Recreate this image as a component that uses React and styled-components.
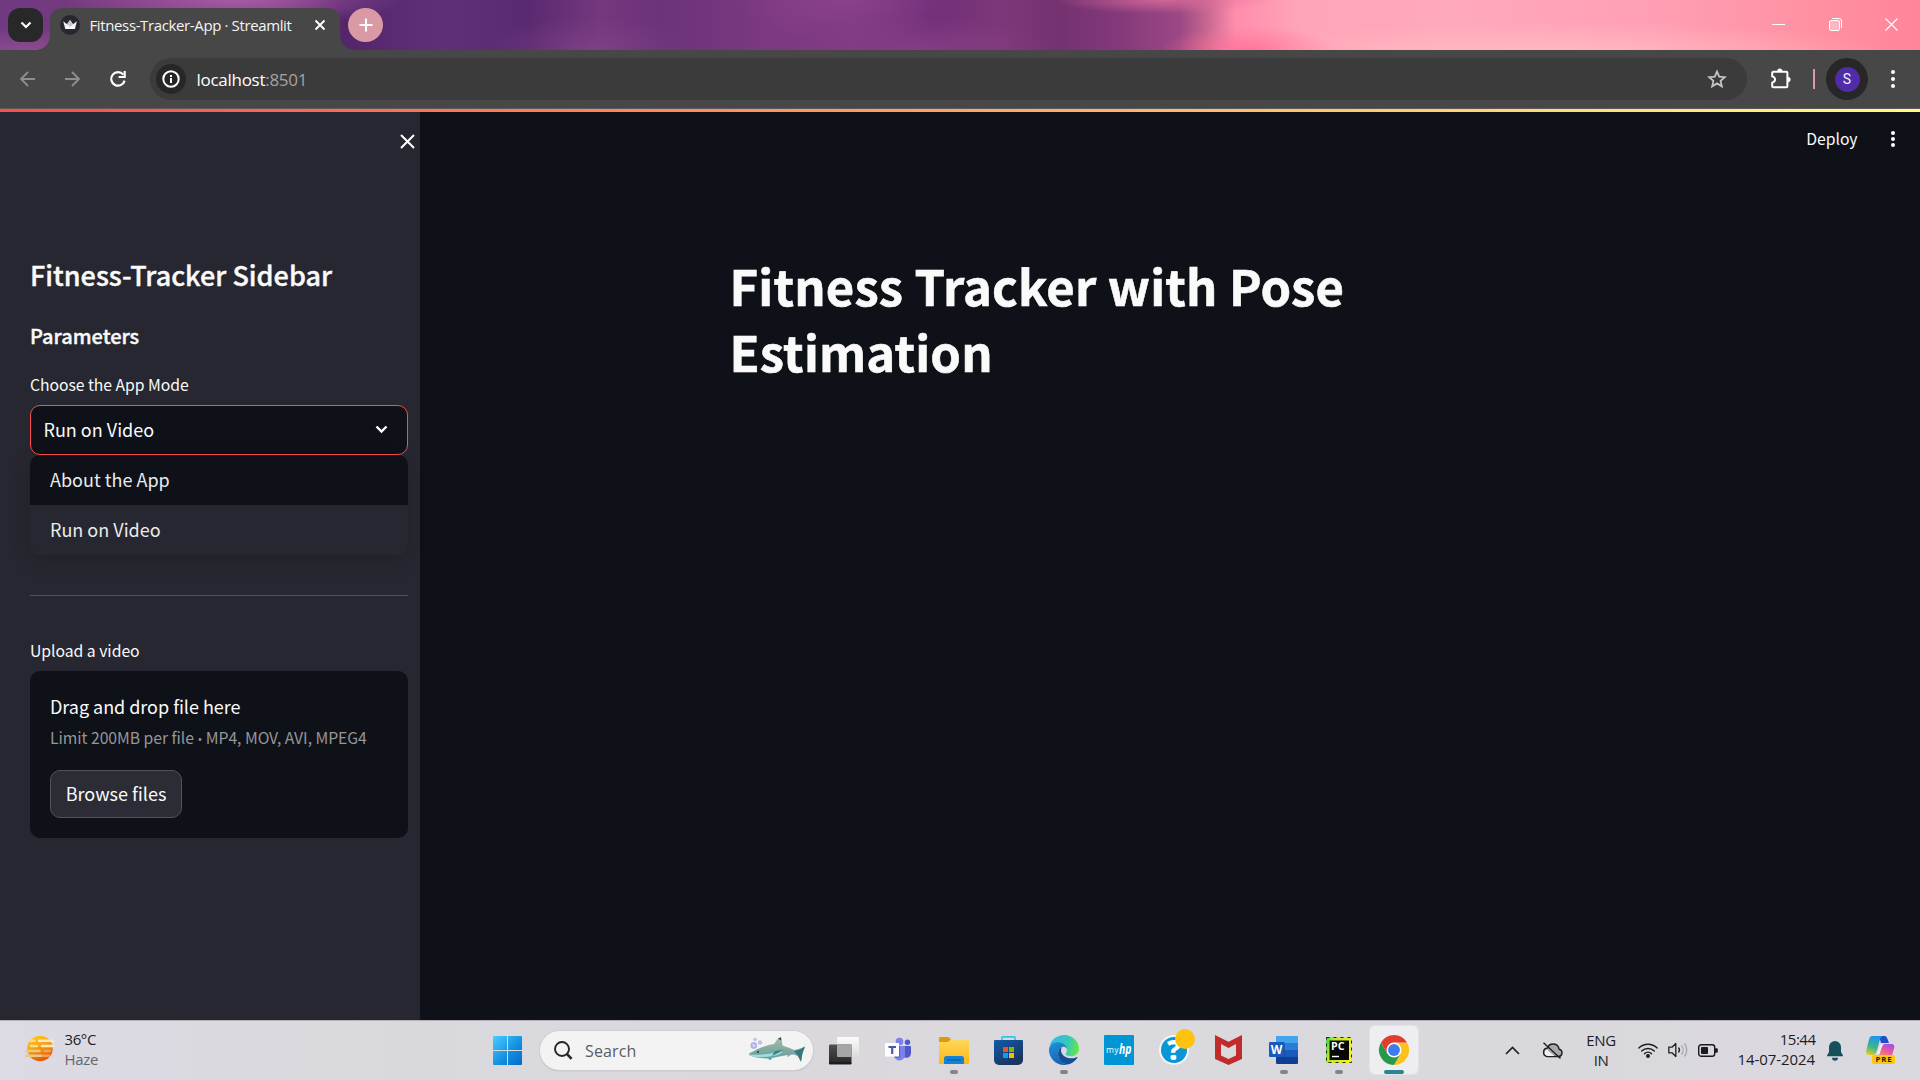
import React from 'react';
import styled, { createGlobalStyle } from 'styled-components';

const source = '"Noto Sans CJK SC", "Open Sans", sans-serif';
const system = '"Open Sans", "Noto Sans", sans-serif';

const GlobalStyle = createGlobalStyle`
  * { box-sizing: border-box; }
  body { margin: 0; background: #0e1117; overflow: hidden; }
  svg { display: block; flex: none; overflow: visible; }
  button { font: inherit; color: inherit; border: 0; padding: 0; background: none; }
`;

const Screen = styled.div`
  width: 1920px;
  height: 1080px;
  display: flex;
  flex-direction: column;
  overflow: hidden;
`;

/* ---------- browser tab strip ---------- */

const TabStrip = styled.header`
  height: 50px;
  flex: none;
  display: flex;
  align-items: flex-start;
  padding: 8px 0 0 8px;
  background:
    radial-gradient(ellipse 170px 26px at 235px 0, #a65aa6 0%, rgba(166, 90, 166, 0) 100%),
    radial-gradient(ellipse 130px 22px at 30px 50px, #8d4a90 0%, rgba(141, 74, 144, 0) 100%),
    radial-gradient(ellipse 100px 34px at 590px 50px, rgba(131, 68, 139, .6) 0%, rgba(131, 68, 139, 0) 100%),
    radial-gradient(ellipse 110px 44px at 850px 0, rgba(150, 70, 148, .6) 0%, rgba(150, 70, 148, 0) 100%),
    radial-gradient(ellipse 130px 34px at 920px 50px, rgba(146, 70, 140, .6) 0%, rgba(146, 70, 140, 0) 100%),
    radial-gradient(ellipse 110px 14px at 1165px 0, rgba(222, 110, 155, .8) 0%, rgba(222, 110, 155, 0) 100%),
    radial-gradient(ellipse 90px 24px at 1250px 50px, rgba(255, 112, 150, .8) 0%, rgba(255, 112, 150, 0) 100%),
    radial-gradient(ellipse 340px 34px at 1560px 56px, rgba(255, 190, 195, .9) 0%, rgba(255, 190, 195, 0) 100%),
    linear-gradient(90deg, #6f3a80 0, #77397f 120px, #7b3a84 260px, #54256a 345px, #5f3078 440px,
      #5a2a70 530px, #75377e 600px, #6c327a 660px, #7d3a82 780px, #7b3880 850px, #702f78 930px,
      #7c3779 1000px, #743270 1060px, #84397a 1120px, #9c4884 1180px, #c4648f 1205px, #ff8dac 1235px,
      #ffa5b8 1300px, #ffa9bc 1450px, #ff9fb4 1650px, #ff92a4 1800px, #ff849a 1920px);
`;

const TabSearch = styled.button`
  width: 35px;
  height: 34px;
  border-radius: 12px;
  background: #282828;
  display: grid;
  place-items: center;
  margin-right: 7px;
`;

const Tab = styled.div`
  position: relative;
  width: 290px;
  height: 42px;
  padding: 0 14px 8px 10px;
  display: flex;
  align-items: center;
  background: #474747;
  border-radius: 12px 12px 0 0;

  &::before, &::after {
    content: "";
    position: absolute;
    bottom: 0;
    width: 14px;
    height: 14px;
  }
  &::before { left: -14px; background: radial-gradient(circle at 0 0, transparent 13.5px, #474747 14px); }
  &::after { right: -14px; background: radial-gradient(circle at 100% 0, transparent 13.5px, #474747 14px); }
`;

const TabTitle = styled.span`
  font: 400 15px/22px ${system};
  letter-spacing: -.376px;
  color: #f4f4f4;
  margin-left: 9.5px;
  flex: 1;
  white-space: nowrap;
  padding-bottom: 1px;
`;

const NewTab = styled.button`
  width: 35px;
  height: 34px;
  border-radius: 50%;
  margin-left: 8px;
  background: #d99aa6;
  display: grid;
  place-items: center;
`;

const WindowControls = styled.div`
  margin-left: auto;
  display: flex;
  padding: 10px 22px 0 0;
  gap: 43.5px;
`;

/* ---------- browser toolbar ---------- */

const Toolbar = styled.nav`
  height: 59px;
  flex: none;
  background: #474747;
  border-bottom: 1px solid #5b5b5b;
  display: flex;
  align-items: center;
  padding: 0 18px;
`;

const NavButtons = styled.div`
  width: 132px;
  display: flex;
  align-items: center;
  gap: 24px;
  svg:last-child { margin-left: 3px; }
`;

const AddressBar = styled.div`
  width: 1597px;
  height: 42px;
  border-radius: 21px;
  background: #3b3b3b;
  display: flex;
  align-items: center;
  padding: 0 20px 0 6px;
`;

const SiteInfo = styled.span`
  width: 30px;
  height: 30px;
  border-radius: 50%;
  background: #272727;
  display: grid;
  place-items: center;
`;

const Url = styled.span`
  font: 400 17px/24px ${system};
  letter-spacing: -.28px;
  color: #fff;
  margin-left: 10.5px;
  padding-top: 1px;
  flex: 1;
  span { color: #a3a3a3; }
`;

const ToolbarEnd = styled.div`
  display: flex;
  align-items: center;
  flex: 1;
  padding-left: 23px;
  svg:first-child { margin-top: -2px; }
`;

const ToolbarDivider = styled.i`
  width: 2px;
  height: 20px;
  background: #d99aa6;
  margin: 0 11px 0 22px;
`;

const AvatarRing = styled.span`
  width: 42px;
  height: 42px;
  border-radius: 50%;
  background: #272727;
  display: grid;
  place-items: center;
  margin-right: 21.5px;
`;

const Avatar = styled.span`
  width: 25px;
  height: 25px;
  border-radius: 50%;
  background: #4f2ca8;
  color: #f2effa;
  font: 400 14px/25px Roboto, sans-serif;
  text-align: center;
`;

/* ---------- page ---------- */

const Page = styled.div`
  flex: 1;
  min-height: 0;
  display: flex;
  flex-direction: column;
  background: #0e1117;
`;

const Decoration = styled.div`
  height: 3px;
  flex: none;
  background: linear-gradient(90deg, #ff4b4b, #fffd80);
`;

const PageBody = styled.div`
  flex: 1;
  display: flex;
`;

const Sidebar = styled.aside`
  width: 420px;
  background: #262730;
  color: #fafafa;
  font-family: ${source};
  padding: 0 12px 0 30px;
`;

const SidebarHeader = styled.div`
  height: 145px;
  display: flex;
  justify-content: flex-end;
  padding-top: 22px;
  margin-right: -7px;
`;

const SidebarTitle = styled.h2`
  margin: 0 0 31px;
  font-size: 27px;
  line-height: 36px;
  font-weight: 500;
  -webkit-text-stroke: .4px currentColor;
`;

const SidebarSubtitle = styled.h3`
  margin: 0 0 27px;
  font-size: 20px;
  line-height: 24px;
  font-weight: 500;
  -webkit-text-stroke: .4px currentColor;
`;

const Label = styled.label`
  display: block;
  font-size: 15.75px;
  line-height: 20px;
  letter-spacing: ${p => p.$tracking || 0}px;
  margin-bottom: 10px;
`;

const Select = styled.div`
  position: relative;
  height: 50px;
  border: 1px solid #ff4b4b;
  border-radius: 10px;
  background: #0e1117;
  display: flex;
  align-items: center;
  justify-content: space-between;
  padding: 0 19px 2px 12.5px;
  font-size: 18px;
  line-height: 24px;
  svg { margin-top: 1px; }
`;

const Menu = styled.div`
  position: absolute;
  left: -1px;
  right: -1px;
  top: 49px;
  border-radius: 10px;
  overflow: hidden;
  background: #262730;
  box-shadow: 0 5px 20px rgba(0, 0, 0, .16);
`;

const Option = styled.div`
  height: 50px;
  padding: 12px 20px 14px 20px;
  color: #ebebec;
  background: ${p => (p.$highlighted ? '#0e1117' : 'transparent')};
`;

const Rule = styled.hr`
  border: 0;
  height: 1px;
  background: #51525a;
  margin: 140px 0 45px;
`;

const Dropzone = styled.section`
  height: 167px;
  border-radius: 10px;
  background: #0e1117;
  padding: 23px 20px 20px;
  display: flex;
  flex-direction: column;
  align-items: flex-start;
`;

const DropTitle = styled.span`
  font-size: 18px;
  line-height: 24px;
  margin-bottom: 10px;
  letter-spacing: -.03px;
`;

const DropHint = styled.small`
  font-size: 15.75px;
  line-height: 20px;
  letter-spacing: -.05px;
  color: #95969a;
  white-space: nowrap;
  b { font: 400 13px/1 "Open Sans", sans-serif; }
`;

const BrowseButton = styled.button`
  && {
    width: 132px;
    height: 48px;
    margin-top: 22px;
    padding-bottom: 2px;
    border: 1px solid #51525a;
    border-radius: 10px;
    background: #2b2c36;
    font: 400 18px/24px ${source};
  }
`;

const Main = styled.main`
  flex: 1;
  color: #fafafa;
  font-family: ${source};
`;

const MainHeader = styled.div`
  height: 140px;
  display: flex;
  justify-content: flex-end;
  align-items: flex-start;
  padding: 16px 24.5px 0 0;
`;

const Deploy = styled.span`
  font-size: 15.75px;
  line-height: 22px;
  letter-spacing: -.056px;
  margin-right: 32px;
`;

const Title = styled.h1`
  width: 880px;
  margin: 0 auto;
  font-size: 49px;
  line-height: 66px;
  font-weight: 700;
  letter-spacing: .162px;
  text-indent: -.5px;
  -webkit-text-stroke: .6px currentColor;
  span { display: block; }
`;

/* ---------- taskbar ---------- */

const Taskbar = styled.footer`
  height: 60px;
  flex: none;
  display: flex;
  align-items: center;
  padding-bottom: 1px;
  border-top: 1px solid #b4b2b7;
  background: linear-gradient(90deg, #dcdae4 0, #d9d9dd 400px, #dbd8dd 800px, #dad9de 1100px, #d9d8dc 1500px, #dbd9e0 1920px);
  font-family: ${system};
  color: #1d1d1f;
`;

const Weather = styled.div`
  width: 480px;
  display: flex;
  align-items: center;
  gap: 9.5px;
  padding-left: 25px;
  padding-bottom: 3px;
`;

const Stack = styled.div`
  display: flex;
  flex-direction: column;
  text-align: ${p => p.$align || 'left'};
  font-size: 15px;
  line-height: 20px;
  white-space: nowrap;
`;

const Tight = styled.span`
  letter-spacing: ${p => p.$by}px;
  color: ${p => p.$color || 'inherit'};
  margin-right: ${p => p.$by}px;
`;

const StartSlot = styled.div`
  width: 60px;
  padding-left: 13px;
`;

const SearchBox = styled.div`
  width: 273px;
  height: 39px;
  border-radius: 20px;
  background: #f3f3f4;
  box-shadow: 0 0 0 1px #cfcdd2, 0 1px 1px #8f8d92;
  display: flex;
  align-items: center;
  padding: 0 7px 0 14px;
  margin-right: 3px;
`;

const SearchText = styled.span`
  flex: 1;
  margin-left: 12px;
  padding-top: 1px;
  font-size: 16px;
  line-height: 24px;
  letter-spacing: .13px;
  color: #5c5c5e;
`;

const AppSlot = styled.div`
  width: 55px;
  height: 48px;
  display: grid;
  place-items: center;
  position: relative;
`;

const ActiveTile = styled.div`
  width: 48px;
  height: 48px;
  border-radius: 5px;
  background: #eeedf0;
  box-shadow: 0 0 0 1px #e3e2e6;
  display: grid;
  place-items: center;
`;

const Indicator = styled.i`
  position: absolute;
  bottom: 0;
  left: 50%;
  width: ${p => (p.$active ? 20 : 8)}px;
  height: 4px;
  margin-left: ${p => (p.$active ? -10 : -4)}px;
  border-radius: 2px;
  background: ${p => (p.$active ? '#2b8492' : '#858387')};
`;

const Tray = styled.div`
  margin-left: auto;
  display: flex;
  align-items: center;
  padding-right: 25px;
`;

const TrayItem = styled.div`
  margin-right: ${p => p.$gap}px;
  padding-bottom: ${p => p.$lift || 0}px;
`;

/* ---------- icons ---------- */

const Stroke = ({ w, h = w, d, color = '#fff', width = 2, ...rest }) => (
  <svg width={w} height={h} viewBox={`0 0 ${w} ${h}`} fill="none" stroke={color} strokeWidth={width} {...rest}>
    <path d={d} />
  </svg>
);

const Dots = ({ gap = 7 }) => (
  <svg width="6" height="22" viewBox="0 0 6 22" fill="#fff">
    <circle cx="3" cy={11 - gap} r="2" /><circle cx="3" cy="11" r="2" /><circle cx="3" cy={11 + gap} r="2" />
  </svg>
);

const Favicon = () => (
  <svg width="20" height="20" viewBox="0 0 20 20">
    <circle cx="10" cy="10" r="10" fill="#262730" />
    <path d="M3.2 6.2 7 9.2 10 5l3 4.200L16.900 6.200 15 13.800H5.200z" fill="#f3f3f3" />
    <path d="M7 9.200 10 5l3 4.200-3 2.800z" fill="#c9c9cb" />
    <path d="M5 12h10l-.4 2H5.500z" fill="#fff" />
  </svg>
);

const Reload = () => (
  <svg width="18" height="18" viewBox="0 0 18 18" fill="none" stroke="#fff" strokeWidth="2.200">
    <path d="M14.300 4.600A6.800 6.800 0 1 0 15.600 10.600" />
    <path d="M15.700 1v6H9.600" />
  </svg>
);

const Info = () => (
  <svg width="18" height="18" viewBox="0 0 18 18">
    <circle cx="9" cy="9" r="7.700" fill="none" stroke="#fff" strokeWidth="2" />
    <path d="M8 8h2v5H8zM8 5h2v2H8z" fill="#fff" />
  </svg>
);

const Star = () => (
  <svg width="20" height="20" viewBox="0 0 20 20" fill="none" stroke="#c4c4c4" strokeWidth="1.800">
    <path d="m10 2.600 2.200 5.100 5.600.5-4.200 3.700 1.200 5.400-4.800-2.900-4.800 2.900 1.200-5.400L2.200 8.200l5.600-.5z" />
  </svg>
);

const Puzzle = () => (
  <svg width="21" height="21" viewBox="0 0 21 21">
    <path d="M3.200 3.800h13.200a1 1 0 0 1 1 1v13.400a1 1 0 0 1-1 1H3.200a1 1 0 0 1-1-1v-3.600c3.800-1 3.800-5.200 0-6.200V4.800a1 1 0 0 1 1-1z" fill="none" stroke="#fff" strokeWidth="2" />
    <path d="M7.400 3.200a2.400 2.400 0 0 1 4.800 0zM18 9.200a2.400 2.400 0 0 1 0 4.800z" fill="#fff" stroke="#fff" strokeWidth=".6" />
  </svg>
);

const Restore = () => (
  <svg width="13" height="13" viewBox="0 0 13 13" fill="none" stroke="#fff">
    <rect x=".5" y="2.500" width="10" height="10" rx="1.500" fill="rgba(255,255,255,.35)" />
    <path d="M3 .5h7A2.500 2.500 0 0 1 12.500 3v7" />
  </svg>
);

const Haze = () => (
  <svg width="30" height="28" viewBox="0 0 30 28">
    <defs>
      <linearGradient id="sun" x1="0" y1="0" x2=".4" y2="1"><stop offset="0" stopColor="#ffd21c" /><stop offset=".5" stopColor="#f9a216" /><stop offset="1" stopColor="#e65c10" /></linearGradient>
    </defs>
    <circle cx="15" cy="13.500" r="12.800" fill="url(#sun)" />
    <g strokeWidth="2.600" strokeLinecap="round">
      <path d="M14 5.800h14.500M17 11h11" stroke="#f6e9c4" />
      <path d="M5.500 5.800h4M6 11h6" stroke="#ffd98a" />
      <path d="M1.500 16h13M1.500 20.800h15" stroke="#e6cb83" />
      <path d="M19.500 16h5M19 20.800h5" stroke="#f6a54b" />
    </g>
  </svg>
);

const Windows = () => (
  <svg width="29" height="29" viewBox="0 0 29 29">
    <defs><linearGradient id="win" x1="0" y1="0" x2="1" y2="1"><stop offset="0" stopColor="#4bcdff" /><stop offset=".55" stopColor="#1592e0" /><stop offset="1" stopColor="#0568c8" /></linearGradient></defs>
    <path fill="url(#win)" d="M1 0h13v14H0V1a1 1 0 0 1 1-1zM15 0h13a1 1 0 0 1 1 1v13H15zM0 15h14v14H1a1 1 0 0 1-1-1zM15 15h14v13a1 1 0 0 1-1 1H15z" />
  </svg>
);

const SearchIcon = () => (
  <svg width="19" height="19" viewBox="0 0 19 19" fill="none" stroke="#262626">
    <circle cx="8" cy="8" r="7" strokeWidth="1.900" /><path d="m12.800 12.800 4.800 5" strokeWidth="2.600" />
  </svg>
);

const Shark = () => (
  <svg width="58" height="28" viewBox="0 0 58 28">
    <defs>
      <linearGradient id="shark" x1="0" y1="0" x2="0" y2="1"><stop offset="0" stopColor="#a5c0ac" /><stop offset=".55" stopColor="#7fa99f" /><stop offset="1" stopColor="#5a9da0" /></linearGradient>
      <radialGradient id="bub"><stop offset="0" stopColor="#d6e6fb" /><stop offset="1" stopColor="#a39ee0" /></radialGradient>
    </defs>
    <circle cx="5.800" cy="9.500" r="3.200" fill="url(#bub)" /><circle cx="12" cy="6.500" r="1.900" fill="url(#bub)" /><circle cx="7" cy="3.200" r="1.500" fill="url(#bub)" />
    <path d="M1 17.500C8 13.500 17 9.200 26 8l4-5.500 3-1.300 1.600 8.400c4.500 1.600 8.400 3.200 11.900 4.400l6.500-1.800L57 10.500l-2.600 7-1.400 8.300-3.500-6-4-1.200-3 .2-2.600 2.400-.4-2.200-5.500 1.100-10 1.900-1.500 2.300-2.800-1.900C12 22.500 6 21.500 1 19z" fill="url(#shark)" />
    <path d="M1 18.500c10 1.200 18-.8 26-1.800l7-2c3 1.200-4 4.500-9 5.200-9 1.600-18 2-24-1z" fill="#9bdfe4" />
    <path d="m27 15-3 5 12-6z" fill="#3f7e84" /><path d="m30 2.500 3-1.300.4 3.500z" fill="#31504f" />
    <path d="m46 15 6-1.500L57 10.500l-2.600 7-1.400 8.300-3-6z" fill="#35777c" />
    <circle cx="10" cy="16" r="1" fill="#302c35" />
  </svg>
);

const TaskView = () => (
  <svg width="30" height="29" viewBox="0 0 30 29">
    <defs>
      <linearGradient id="tvd" x1="0" y1="0" x2="0" y2="1"><stop offset="0" stopColor="#505050" /><stop offset="1" stopColor="#262626" /></linearGradient>
      <linearGradient id="tvl" x1="0" y1="0" x2="0" y2="1"><stop offset="0" stopColor="#fbfbfb" /><stop offset="1" stopColor="#dcdcde" /></linearGradient>
    </defs>
    <rect x="8" y="1" width="22" height="20" rx="1" fill="url(#tvl)" />
    <rect y="8.500" width="22.500" height="20" rx="1" fill="url(#tvd)" />
    <path d="M8 8.500h14.500V21H9a1 1 0 0 1-1-1z" fill="#a6a6a6" />
    <path d="M0 27h22.500" stroke="#111" strokeWidth="1" />
  </svg>
);

const Teams = () => (
  <svg width="27" height="26" viewBox="0 0 27 26">
    <circle cx="14.500" cy="4.500" r="3.800" fill="#7b83eb" /><circle cx="22.500" cy="5.300" r="2.700" fill="#5059c9" />
    <path d="M17 9h8.200c.5 0 .8.300.8.800v6c0 3-2 5-4.600 5S17 18.800 17 16z" fill="#5059c9" />
    <path d="M9 9h11v8.500a5.500 5.500 0 0 1-11 1z" fill="#7b83eb" />
    <path d="M10 9h5v11.500H9.500z" fill="#3f3f78" opacity=".55" />
    <rect x="0" y="6" width="14" height="13.500" fill="#fff" />
    <path d="M3.500 9h7.500v2H8.300v6H6.100v-6H3.500z" fill="#4b53bc" />
  </svg>
);

const Explorer = () => (
  <svg width="30" height="27" viewBox="0 0 30 27">
    <defs><linearGradient id="fold" x1="0" y1="0" x2="0" y2="1"><stop offset="0" stopColor="#ffd75a" /><stop offset="1" stopColor="#fcb714" /></linearGradient></defs>
    <path d="M0 1a1 1 0 0 1 1-1h8.500L12 2.500 9 5.500H0z" fill="#df9a08" />
    <path d="M0 5h8.500L12 3h17a1 1 0 0 1 1 1v22a1 1 0 0 1-1 1H1a1 1 0 0 1-1-1z" fill="url(#fold)" />
    <path d="M5 27v-5.500a2.500 2.500 0 0 1 2.500-2.500h15a2.500 2.500 0 0 1 2.500 2.500V27z" fill="#1283d8" />
    <path d="M8 23h14" stroke="#0a5ca8" strokeWidth="1.200" />
  </svg>
);

const Store = () => (
  <svg width="29" height="29" viewBox="0 0 29 29">
    <defs><linearGradient id="sto" x1="0" y1="0" x2=".6" y2="1"><stop offset="0" stopColor="#0f5ba9" /><stop offset="1" stopColor="#1c335a" /></linearGradient></defs>
    <path d="M8 5V1.500a.7.700 0 0 1 .7-.7h11.600a.7.700 0 0 1 .7.700V5" fill="none" stroke="#33c3f3" strokeWidth="1.700" />
    <path d="M1 4h27a1 1 0 0 1 1 1v19a5 5 0 0 1-5 5H5a5 5 0 0 1-5-5V5a1 1 0 0 1 1-1z" fill="url(#sto)" />
    <path d="M9 11h5v5H9z" fill="#f25022" /><path d="M15 11h5v5h-5z" fill="#7fba00" />
    <path d="M9 17h5v5H9z" fill="#00a4ef" /><path d="M15 17h5v5h-5z" fill="#ffb900" />
  </svg>
);

const Edge = () => (
  <svg width="30" height="30" viewBox="0 0 24 24">
    <defs>
      <linearGradient id="ed1" x1="0" y1=".3" x2="1" y2=".5"><stop offset="0" stopColor="#36b8ec" /><stop offset=".6" stopColor="#35c8b9" /><stop offset="1" stopColor="#66e74a" /></linearGradient>
      <linearGradient id="ed2" x1=".2" y1="0" x2=".6" y2="1"><stop offset="0" stopColor="#2190d8" /><stop offset="1" stopColor="#1360b0" /></linearGradient>
    </defs>
    <path d="M.4 9.500C1.500 4 6.200 0 12 0c7 0 12 5.200 12 11 0 3.800-3 6-6.300 6-3 0-4.400-1-4.400-1.800 0-.6 1-1.200 1-3C14.300 9 11 6.500 7 6.500 3.800 6.500 1.500 8 .4 9.500z" fill="url(#ed1)" />
    <path d="M0 12c0-3.500 3-6.300 7-6.300 3.700 0 6.700 2.300 7.200 5-1-1.200-2.600-1.600-3.900-1.100C8.300 10.500 7 13 7.300 16c.4 4 3.500 7.300 7.200 7.700-.8.200-1.600.3-2.500.3C5.400 24 0 18.600 0 12z" fill="url(#ed2)" />
    <path d="M10.300 9.600C8.300 10.500 7 13 7.300 16c.4 4 3.400 7.400 7.500 7.600 3.200-.7 6-2.600 7.800-5.300.3-.5-.1-.9-.6-.6-1 .5-2.300.9-3.800.9-5 0-8.600-3.200-8.600-6.300 0-1 .3-2 .7-2.700z" fill="#124f97" />
  </svg>
);

const MyHp = () => (
  <svg width="30" height="30" viewBox="0 0 30 30">
    <rect width="30" height="30" rx="1" fill="#0096d6" />
    <text x="2" y="18" fontFamily="Open Sans, sans-serif" fontSize="8.500" fontWeight="500" fill="#fff" textLength="12.500">my</text>
    <text x="15" y="19" fontFamily="Open Sans, sans-serif" fontSize="13.500" fontWeight="700" fontStyle="italic" fill="#fff" textLength="12.500" lengthAdjust="spacingAndGlyphs">hp</text>
  </svg>
);

const Help = () => (
  <svg width="30" height="30" viewBox="0 0 30 30">
    <circle cx="15" cy="15" r="15" fill="#f2f7fa" /><circle cx="15" cy="15" r="13" fill="#0996d4" />
    <text x="15" y="25" textAnchor="middle" fontFamily="Open Sans, sans-serif" fontSize="28" fontWeight="800" fill="#fff">?</text>
    <circle cx="26" cy="4" r="10" fill="#ffc20e" />
  </svg>
);

const Mcafee = () => (
  <svg width="27" height="30" viewBox="0 0 27 30">
    <path d="M0 0 13.500 6.800 27 0v24L13.500 30 0 24zM6 9v11.500l7.500 3.500 7.500-3.500V9l-7.500 3.900z" fillRule="evenodd" fill="#c22b2c" />
  </svg>
);

const Word = () => (
  <svg width="29" height="28" viewBox="0 0 29 28">
    <path d="M8 0h20a1 1 0 0 1 1 1v6.500H7V1a1 1 0 0 1 1-1z" fill="#41a5ee" /><path d="M7 7h22v7H7z" fill="#2b7cd3" />
    <path d="M7 14h22v7H7z" fill="#185abd" /><path d="M7 21h22v6a1 1 0 0 1-1 1H8a1 1 0 0 1-1-1z" fill="#103f91" />
    <path d="M7 6h8a1 1 0 0 1 1 1v14.500H7z" fill="#0d3f86" opacity=".5" />
    <rect y="6" width="15" height="15" rx="1.200" fill="#185abd" />
    <text x="7.500" y="18" textAnchor="middle" fontFamily="Open Sans, sans-serif" fontSize="12" fontWeight="700" fill="#fff">W</text>
  </svg>
);

const PyCharm = () => (
  <svg width="26" height="26" viewBox="0 0 26 26">
    <defs><linearGradient id="pc" x1="0" y1="0" x2="1" y2=".3"><stop offset="0" stopColor="#1fdc5c" /><stop offset=".3" stopColor="#b8e626" /><stop offset="1" stopColor="#f4f11f" /></linearGradient></defs>
    <rect width="26" height="26" fill="url(#pc)" />
    <rect x=".5" y=".5" width="25" height="25" fill="none" stroke="#222" strokeDasharray="3 4" />
    <rect x="3.500" y="3.500" width="19.500" height="19.500" fill="#050805" />
    <text x="5" y="13" fontFamily="Open Sans, sans-serif" fontSize="10" fontWeight="700" fill="#fff" textLength="13.500" lengthAdjust="spacingAndGlyphs">PC</text>
    <path d="M6 19.500h7" stroke="#fff" strokeWidth="1.400" />
  </svg>
);

const Chrome = () => (
  <svg width="30" height="30" viewBox="0 0 48 48">
    <path d="M24 24V12h20.800A24 24 0 0 1 24 48l10.400-18z" fill="#fcc21b" />
    <path d="M24 24l10.400 6L24 48A24 24 0 0 1 3.200 12l10.400 18z" fill="#269a4a" />
    <path d="M3.200 12A24 24 0 0 1 44.800 12H24v12l-10.400 6z" fill="#e33b2e" />
    <circle cx="24" cy="24" r="12" fill="#fff" /><circle cx="24" cy="24" r="9.500" fill="#3c7cf0" />
  </svg>
);

const CloudOff = () => (
  <svg width="21" height="17" viewBox="0 0 21 17" fill="none" stroke="#202022" strokeWidth="1.400">
    <path d="M5 14.500h11.500a3.700 3.700 0 0 0 .6-7.300A6 6 0 0 0 5.500 6 4.300 4.300 0 0 0 5 14.500z" fill="#a9a8ab" />
    <path d="M7 9.500 12.500 14H5.500a3.300 3.300 0 0 1 0-6.500z" fill="#f0eff2" stroke="none" />
    <path d="M1.500.8 18.500 16.500" />
  </svg>
);

const Wifi = () => (
  <svg width="20" height="15" viewBox="0 0 20 15" fill="none" stroke="#1f1f21" strokeWidth="1.400" strokeLinecap="round">
    <path d="M.8 5a13 13 0 0 1 18.400 0M3.700 8a9 9 0 0 1 12.600 0M6.500 10.700a5 5 0 0 1 7 0" />
    <circle cx="10" cy="13" r="1.300" fill="#1f1f21" />
  </svg>
);

const Volume = () => (
  <svg width="20" height="16" viewBox="0 0 20 16" fill="none" stroke="#1f1f21" strokeWidth="1.300" strokeLinejoin="round">
    <path d="M.8 5.200h3.200L7.800 1.500v13L4 10.800H.8z" /><path d="M10.500 5.500a4 4 0 0 1 0 5" />
    <path d="M13.500 3.500a7 7 0 0 1 0 9M16.500 1.500a10.500 10.500 0 0 1 0 13" stroke="#a9a7ac" />
  </svg>
);

const Battery = () => (
  <svg width="20" height="13" viewBox="0 0 20 13">
    <rect x=".7" y=".7" width="16" height="11.600" rx="2.600" fill="none" stroke="#1b1b1d" strokeWidth="1.400" />
    <rect x="3" y="3" width="7" height="7" rx="1" fill="#1b1b1d" /><path d="M17 4.200h1.500a1.300 1.300 0 0 1 1.300 1.300v2a1.300 1.300 0 0 1-1.300 1.300H17z" fill="#1b1b1d" />
  </svg>
);

const Bell = () => (
  <svg width="16" height="19" viewBox="0 0 16 19" fill="#17505d">
    <path d="M8 0a6 6 0 0 1 6 6v5l2 3.500v.8H0v-.8L2 11V6a6 6 0 0 1 6-6z" /><path d="M5 16.700h6a3 3 0 0 1-6 0z" />
  </svg>
);

const Copilot = () => (
  <svg width="29" height="28" viewBox="0 0 29 28">
    <defs>
      <linearGradient id="cp1" x1=".3" y1="0" x2="0" y2="1"><stop offset="0" stopColor="#2197ea" /><stop offset=".5" stopColor="#3bb58a" /><stop offset="1" stopColor="#f6cf1c" /></linearGradient>
      <linearGradient id="cp2" x1=".8" y1="0" x2=".2" y2="1"><stop offset="0" stopColor="#a04ee8" /><stop offset=".5" stopColor="#e455a8" /><stop offset="1" stopColor="#f9865c" /></linearGradient>
    </defs>
    <path d="M13 0h5.500c1.500 0 2.300 1 2.800 2.500L23 7h-8z" fill="#1c4fc9" />
    <path d="M6 0h11c-2 .5-2.600 2-3.200 4l-3 11c-.7 2.400-2 4-4.500 4H3c-2.300 0-3.500-2-2.800-4.500L3 3.500C3.600 1.300 4.500 0 6 0z" fill="url(#cp1)" />
    <path d="M17 8h8.500c2.200 0 3.300 1.800 2.700 4l-2.400 8H13l2.500-9.500C15.900 9 16.300 8 17 8z" fill="url(#cp2)" />
    <path d="M15 8h3c-1.500.8-2 3-4.500 10h-3.200c1.500-1 3-8 4.700-10z" fill="#efeaf6" />
    <rect x="6" y="19" width="23" height="9" rx="2" fill="#fcc70e" />
    <text x="9.500" y="26.300" fontFamily="Open Sans, sans-serif" fontSize="7.800" fontWeight="700" fill="#1c1c1c" textLength="16">PRE</text>
  </svg>
);

const apps = [
  { name: 'Task view', Icon: TaskView },
  { name: 'Teams', Icon: Teams },
  { name: 'Explorer', Icon: Explorer, running: true },
  { name: 'Store', Icon: Store },
  { name: 'Edge', Icon: Edge, running: true },
  { name: 'myHP', Icon: MyHp },
  { name: 'Help', Icon: Help },
  { name: 'McAfee', Icon: Mcafee },
  { name: 'Word', Icon: Word, running: true },
  { name: 'PyCharm', Icon: PyCharm, running: true },
  { name: 'Chrome', Icon: Chrome, active: true },
];

export default function App() {
  return (
    <Screen>
      <GlobalStyle />
      <TabStrip>
        <TabSearch><Stroke w={12} h={8} d="M1.500 1.500 6 6l4.500-4.500" width={2.200} /></TabSearch>
        <Tab>
          <Favicon />
          <TabTitle>Fitness-Tracker-App · Streamlit</TabTitle>
          <Stroke w={12} d="M1.500 1.500l9 9M10.500 1.500l-9 9" width={1.900} />
        </Tab>
        <NewTab><Stroke w={14} d="M7 .5v13M.5 7h13" width={2} /></NewTab>
        <WindowControls>
          <Stroke w={13} d="M0 6.500h13" width={1} />
          <Restore />
          <Stroke w={13} d="M.5.500l12 12M12.500.500l-12 12" width={1.200} />
        </WindowControls>
      </TabStrip>

      <Toolbar>
        <NavButtons>
          <Stroke w={20} d="M17 10H3.500M10 3l-7 7 7 7" color="#8d8d8d" width={1.900} />
          <Stroke w={20} d="M3 10h13.500M10 3l7 7-7 7" color="#8d8d8d" width={1.900} />
          <Reload />
        </NavButtons>
        <AddressBar>
          <SiteInfo><Info /></SiteInfo>
          <Url>localhost<span>:8501</span></Url>
          <Star />
        </AddressBar>
        <ToolbarEnd>
          <Puzzle />
          <ToolbarDivider />
          <AvatarRing><Avatar>S</Avatar></AvatarRing>
          <Dots />
        </ToolbarEnd>
      </Toolbar>

      <Page>
        <Decoration />
        <PageBody>
          <Sidebar>
            <SidebarHeader>
              <Stroke w={15} d="M1 1l13 13M14 1 1 14" width={2} />
            </SidebarHeader>
            <SidebarTitle>Fitness-Tracker Sidebar</SidebarTitle>
            <SidebarSubtitle>Parameters</SidebarSubtitle>
            <Label $tracking={-0.05}>Choose the App Mode</Label>
            <Select>
              <span>Run on Video</span>
              <Stroke w={13} h={9} d="M1.500 1.500l5 5 5-5" width={2.400} />
              <Menu>
                <Option $highlighted>About the App</Option>
                <Option>Run on Video</Option>
              </Menu>
            </Select>
            <Rule />
            <Label $tracking={-0.03}>Upload a video</Label>
            <Dropzone>
              <DropTitle>Drag and drop file here</DropTitle>
              <DropHint>Limit 200MB per file <b>•</b> MP4, MOV, AVI, MPEG4</DropHint>
              <BrowseButton>Browse files</BrowseButton>
            </Dropzone>
          </Sidebar>
          <Main>
            <MainHeader>
              <Deploy>Deploy</Deploy>
              <Dots gap={6} />
            </MainHeader>
            <Title>
              <span>Fitness Tracker with Pose</span>
              <span>Estimation</span>
            </Title>
          </Main>
        </PageBody>
      </Page>

      <Taskbar>
        <Weather>
          <Haze />
          <Stack>
            <Tight $by={-0.4}>36°C</Tight>
            <Tight $by={-0.3} $color="#67666b">Haze</Tight>
          </Stack>
        </Weather>
        <StartSlot><Windows /></StartSlot>
        <SearchBox>
          <SearchIcon />
          <SearchText>Search</SearchText>
          <Shark />
        </SearchBox>
        {apps.map(({ name, Icon, running, active }) => (
          <AppSlot key={name}>
            {active ? <ActiveTile><Icon /></ActiveTile> : <Icon />}
            {(running || active) && <Indicator $active={active} />}
          </AppSlot>
        ))}
        <Tray>
          <TrayItem $gap={22}><Stroke w={15} h={9} d="M1 8l6.500-6.500L14 8" color="#202022" width={1.700} /></TrayItem>
          <TrayItem $gap={23}><CloudOff /></TrayItem>
          <TrayItem $gap={22} $lift={1}>
            <Stack $align="center"><Tight $by={-0.3}>ENG</Tight><Tight $by={-0.3}>IN</Tight></Stack>
          </TrayItem>
          <TrayItem $gap={10}><Wifi /></TrayItem>
          <TrayItem $gap={10}><Volume /></TrayItem>
          <TrayItem $gap={20}><Battery /></TrayItem>
          <TrayItem $gap={12} $lift={3}>
            <Stack $align="right"><Tight $by={-0.5}>15:44</Tight><Tight $by={-0.08}>14-07-2024</Tight></Stack>
          </TrayItem>
          <TrayItem $gap={23}><Bell /></TrayItem>
          <Copilot />
        </Tray>
      </Taskbar>
    </Screen>
  );
}
